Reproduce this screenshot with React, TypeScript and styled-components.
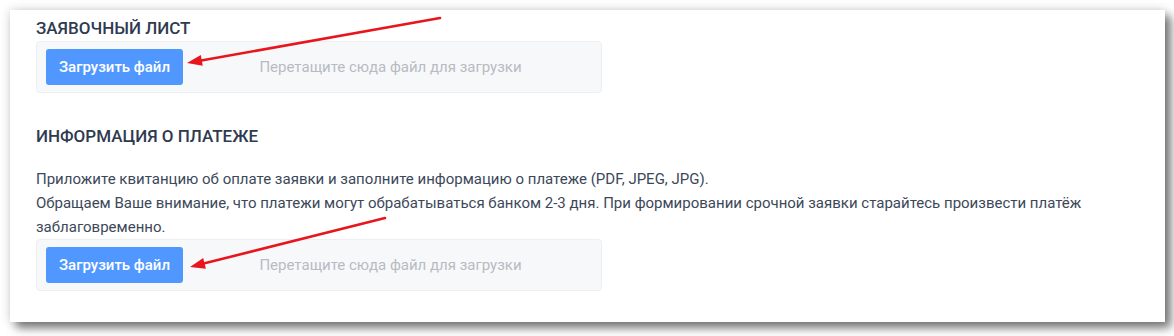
import React from 'react';
import styled, { createGlobalStyle } from 'styled-components';

const Global = createGlobalStyle`
  html, body { margin: 0; background: #ffffff; }
  body { font-family: Roboto, "Liberation Sans", sans-serif; }
`;

const Page = styled.div`
  position: relative;
  width: 1174px;
  height: 336px;
  padding: 10px 9px 0 10px;
  box-sizing: border-box;
  overflow: hidden;
`;

const Card = styled.div`
  background: #ffffff;
  height: 312px;
  box-sizing: border-box;
  padding: 8px 26px 0 26px;
  box-shadow: 0 0 10px rgba(0, 0, 0, 0.16), 6px 6px 9px rgba(0, 0, 0, 0.5);
  display: flex;
  flex-direction: column;
`;

const Heading = styled.h3<{ $gap?: number }>`
  margin: 0 0 ${(p) => p.$gap ?? 3}px;
  font-size: 17px;
  line-height: 20px;
  font-weight: 500;
  color: #2e3a50;
  text-transform: uppercase;
`;

const Section = styled.section<{ $top?: number }>`
  margin-top: ${(p) => p.$top ?? 0}px;
`;

const Text = styled.p`
  margin: 0;
  font-size: 15px;
  line-height: 24px;
  color: #3c4859;
`;

const Dropzone = styled.div`
  width: 566px;
  height: 52px;
  box-sizing: border-box;
  padding: 0 9px;
  background: #f7f8fa;
  border: 1px solid #eceef1;
  border-radius: 4px;
  display: flex;
  align-items: center;
`;

const UploadButton = styled.button`
  flex: none;
  width: 137px;
  height: 36px;
  border: none;
  border-radius: 3px;
  background: #5098ff;
  color: #ffffff;
  font-family: Roboto, "Liberation Sans", sans-serif;
  font-size: 15px;
  font-weight: 500;
  padding: 0;
  cursor: pointer;
`;

const Hint = styled.span`
  flex: 1;
  text-align: center;
  font-size: 15px;
  color: #b7bbc2;
  padding-left: 6px;
`;

const Annotations = styled.svg`
  position: absolute;
  left: 0;
  top: 0;
  width: 1174px;
  height: 336px;
  pointer-events: none;
`;

const Arrow = ({ x1, y1, x2, y2 }: { x1: number; y1: number; x2: number; y2: number }) => {
  const dx = x2 - x1;
  const dy = y2 - y1;
  const len = Math.hypot(dx, dy);
  const ux = dx / len;
  const uy = dy / len;
  const headLen = 15;
  const headW = 5.5;
  const bx = x2 - ux * headLen;
  const by = y2 - uy * headLen;
  const pts = `${x2},${y2} ${bx - uy * headW},${by + ux * headW} ${bx + uy * headW},${by - ux * headW}`;
  return (
    <g>
      <line x1={x1} y1={y1} x2={bx + ux * 2} y2={by + uy * 2} stroke="#e8161c" strokeWidth={2.6} strokeLinecap="round" />
      <polygon points={pts} fill="#e8161c" />
    </g>
  );
};

const DropField = () => (
  <Dropzone>
    <UploadButton>Загрузить файл</UploadButton>
    <Hint>Перетащите сюда файл для загрузки</Hint>
  </Dropzone>
);

export default function App() {
  return (
    <>
      <Global />
      <Page>
        <Card>
          <Section>
            <Heading>Заявочный лист</Heading>
            <DropField />
          </Section>
          <Section $top={33}>
            <Heading $gap={21}>Информация о платеже</Heading>
            <Text>
              Приложите квитанцию об оплате заявки и заполните информацию о платеже (PDF, JPEG, JPG).
              <br />
              Обращаем Ваше внимание, что платежи могут обрабатываться банком 2-3 дня. При формировании срочной заявки
              старайтесь произвести платёж заблаговременно.
            </Text>
            <DropField />
          </Section>
        </Card>
        <Annotations viewBox="0 0 1174 336">
          <Arrow x1={440} y1={18} x2={187} y2={63} />
          <Arrow x1={385} y1={218} x2={190} y2={267} />
        </Annotations>
      </Page>
    </>
  );
}
